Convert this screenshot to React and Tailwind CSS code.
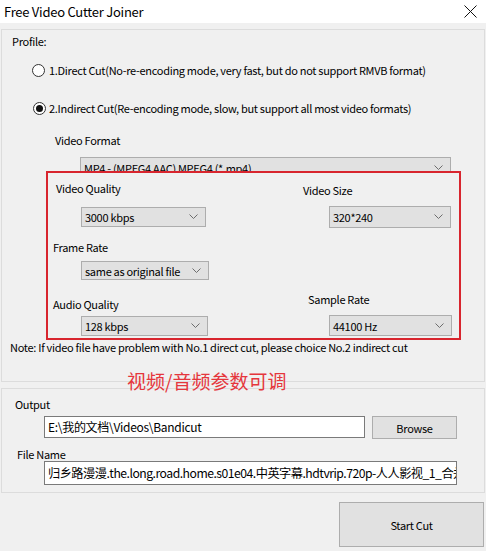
import React from "react";

const FONT = { fontFamily: '"Noto Sans CJK SC", "Noto Sans", sans-serif' };

function Chevron() {
  return (
    <svg width="9" height="6" viewBox="0 0 9 6" className="shrink-0">
      <polyline points="0.5,0.5 4.5,4.5 8.5,0.5" fill="none" stroke="#6d6d6d" strokeWidth="1" />
    </svg>
  );
}

function Combo({ text, className }) {
  return (
    <div className={"flex items-center justify-between bg-[#e1e1e1] border border-[#adadad] pl-[3px] pr-[7px] text-black " + className}>
      <span className="whitespace-nowrap">{text}</span>
      <Chevron />
    </div>
  );
}

function Radio({ checked }) {
  return (
    <div className="w-[13px] h-[13px] rounded-full border border-[#333] bg-white flex items-center justify-center shrink-0">
      {checked && <div className="w-[7px] h-[7px] rounded-full bg-[#111]" />}
    </div>
  );
}

export default function App() {
  return (
    <div className="relative w-[486px] h-[551px] bg-[#f0f0f0] text-black overflow-hidden text-[11px] leading-[16px] tracking-[-0.3px]" style={FONT}>
      {/* title bar */}
      <div className="h-[23px] bg-white flex items-center justify-between pl-[4px] pr-[9px]">
        <span className="text-[13px] leading-[18px] tracking-[-0.25px]">Free Video Cutter Joiner</span>
        <svg width="13" height="13" viewBox="0 0 13 13">
          <path d="M0.5 0.5 L12.5 12.5 M12.5 0.5 L0.5 12.5" stroke="#111" strokeWidth="1" />
        </svg>
      </div>

      {/* profile panel */}
      <div className="ml-[1px] mt-[6px] w-[484px] h-[353px] border border-[#dcdcdc] flex flex-col">
        <div className="mt-[3px] ml-[10px] h-[16px]">Profile:</div>
        <div className="mt-[13px] ml-[30px] h-[16px] flex items-center gap-[4px]">
          <Radio />
          <span className="whitespace-nowrap">1.Direct Cut(No-re-encoding mode, very fast, but do not support RMVB format)</span>
        </div>
        <div className="mt-[22px] ml-[31px] h-[16px] flex items-center gap-[3px]">
          <Radio checked />
          <span className="whitespace-nowrap">2.Indirect Cut(Re-encoding mode, slow, but support all most video formats)</span>
        </div>
        <div className="mt-[16px] ml-[53px] h-[16px]">Video Format</div>
        <Combo text="MP4 - (MPEG4 AAC) MPEG4 (*.mp4)" className="mt-[9px] ml-[78px] w-[371px] h-[22px] shrink-0" />

        {/* red annotated box */}
        <div className="relative z-10 mt-[-8px] ml-[44px] w-[415px] h-[169px] shrink-0 border-2 border-[#d8252e] bg-[#f0f0f0] flex">
          <div className="flex flex-col w-[255px]">
            <div className="mt-[7px] ml-[8px] h-[16px]">Video Quality</div>
            <Combo text="3000 kbps" className="mt-[11px] ml-[33px] w-[125px] h-[20px]" />
            <div className="mt-[12px] ml-[5px] h-[16px]">Frame Rate</div>
            <Combo text="same as original file" className="mt-[6px] ml-[33px] w-[128px] h-[19px]" />
            <div className="mt-[16px] ml-[5px] h-[16px]">Audio Quality</div>
            <Combo text="128 kbps" className="mt-[4px] ml-[33px] w-[127px] h-[20px]" />
          </div>
          <div className="flex flex-col">
            <div className="mt-[9px] h-[16px]">Video Size</div>
            <Combo text="320*240" className="mt-[8px] ml-[26px] w-[122px] h-[22px]" />
            <div className="mt-[63px] ml-[5px] h-[16px]">Sample Rate</div>
            <Combo text="44100 Hz" className="mt-[8px] ml-[26px] w-[123px] h-[21px]" />
          </div>
        </div>

        <div className="mt-[-1px] ml-[8px] h-[16px] whitespace-nowrap">
          Note: If video file have problem with No.1 direct cut, please choice No.2 indirect cut
        </div>
      </div>

      {/* annotation text */}
      <div className="absolute left-[127px] top-[369px] text-[19px] leading-[24px] tracking-normal text-[#e5363c] whitespace-nowrap">
        视频/音频参数可调
      </div>

      {/* output panel */}
      <div className="ml-[1px] mt-[6px] w-[484px] h-[105px] border border-[#dcdcdc] flex flex-col">
        <div className="mt-[7px] ml-[13px] h-[16px]">Output</div>
        <div className="mt-[4px] ml-[42px] flex gap-[7px] items-start">
          <div className="w-[321px] h-[22px] bg-white border border-[#7a7a7a] pl-[3px] flex items-center text-[12px]">E:\我的文档\Videos\Bandicut</div>
          <div className="w-[85px] h-[23px] bg-[#e1e1e1] border border-[#adadad] flex items-center justify-center">Browse</div>
        </div>
        <div className="mt-[7px] ml-[15px] h-[15px]">File Name</div>
        <div className="ml-[42px] w-[413px] h-[24px] bg-white border border-[#7a7a7a] pl-[3px] flex items-center overflow-hidden whitespace-nowrap text-[12.2px] tracking-[-0.5px]">
          归乡路漫漫.the.long.road.home.s01e04.中英字幕.hdtvrip.720p-人人影视_1_合并
        </div>
      </div>

      <div className="mt-[9px] ml-[339px] w-[145px] h-[45px] bg-[#e1e1e1] border border-[#adadad] flex items-center justify-center">
        Start Cut
      </div>
    </div>
  );
}
